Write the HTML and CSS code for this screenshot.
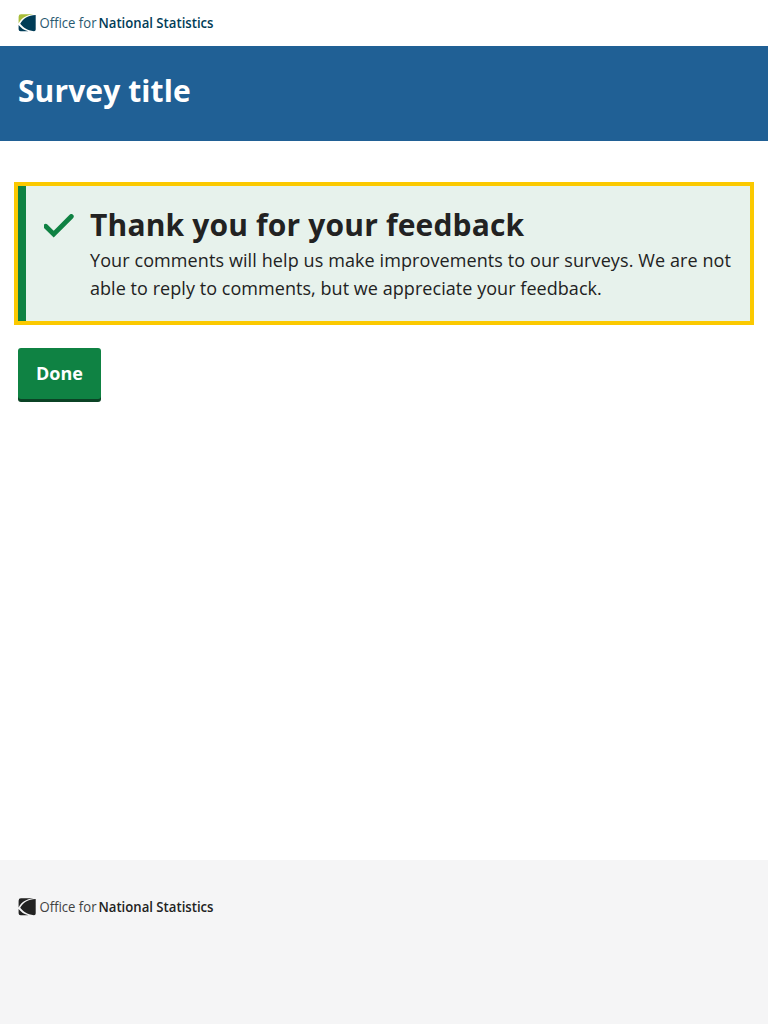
FILE: index.html
```html
<!DOCTYPE html>
<html lang="en">
<head>
<meta charset="utf-8">
<title>Survey title</title>
<link rel="stylesheet" href="styles.css">
</head>
<body>
<header>
  <div class="brand-bar">
    <svg class="logo" viewBox="0 0 196 18" role="img" aria-label="Office for National Statistics">
      <path class="logo-accent" d="M3 0.300H15.500C8 1 3 4.500 0.600 9.500V2.700Q0.600 0.300 3 0.300Z"/>
      <path class="logo-mark" d="M17.700 1V15.500Q17.700 17.300 16 17.300C9 16.300 5 13.500 2.200 9.800C5 4.500 10 1.500 17.700 1ZM0.600 11C3 14 6 16.300 10.500 17.300H2.600Q0.600 17.300 0.600 15.300Z"/>
      <text class="logo-light" x="21.500" y="14.200" textLength="57" lengthAdjust="spacingAndGlyphs">Office for</text>
      <text class="logo-bold" x="80.500" y="14.200" textLength="115" lengthAdjust="spacingAndGlyphs">National Statistics</text>
    </svg>
  </div>
  <div class="title-bar"><div class="survey-title">Survey title</div></div>
</header>
<main class="content">
  <section class="panel">
    <svg class="tick" viewBox="0 0 30 24" aria-hidden="true"><path d="M1.700 12.200L9.700 20.200L27.300 2.500"/></svg>
    <div>
      <h1 class="panel-title">Thank you for your feedback</h1>
      <p class="panel-text"><span class="panel-lead">Your comments will help us make improvements to our surveys. We are not</span> able to reply to comments, but we appreciate your feedback.</p>
    </div>
  </section>
  <button class="button" type="button">Done</button>
</main>
<footer class="footer">
  <svg class="logo logo-mono" viewBox="0 0 196 18" role="img" aria-label="Office for National Statistics">
    <path class="logo-accent" d="M3 0.300H15.500C8 1 3 4.500 0.600 9.500V2.700Q0.600 0.300 3 0.300Z"/>
    <path class="logo-mark" d="M17.700 1V15.500Q17.700 17.300 16 17.300C9 16.300 5 13.500 2.200 9.800C5 4.500 10 1.500 17.700 1ZM0.600 11C3 14 6 16.300 10.500 17.300H2.600Q0.600 17.300 0.600 15.300Z"/>
    <text class="logo-light" x="21.500" y="14.200" textLength="57" lengthAdjust="spacingAndGlyphs">Office for</text>
    <text class="logo-bold" x="80.500" y="14.200" textLength="115" lengthAdjust="spacingAndGlyphs">National Statistics</text>
  </svg>
</footer>
</body>
</html>
```
FILE: styles.css
```css
* { box-sizing: border-box; }
body {
  margin: 0;
  min-height: 100vh;
  display: flex;
  flex-direction: column;
  font-family: "Open Sans", sans-serif;
  font-size: 18px;
  line-height: 28px;
  color: #222;
  background: #fff;
}
.brand-bar { height: 46px; padding: 14px 18px; }
.logo { display: block; width: 196px; height: 18px; overflow: visible; color: #003c57; }
.logo-mono { color: #222; }
.logo-accent { fill: #a8bd3a; }
.logo-mono .logo-accent { fill: #222; }
.logo-mark { fill: currentColor; }
.logo-light, .logo-bold { fill: currentColor; font-family: "Open Sans", sans-serif; font-size: 15px; }
.logo-light { font-weight: 400; opacity: 0.85; }
.logo-bold { font-weight: 600; }
.title-bar { height: 95px; padding: 25px 18px; background: #206095; color: #fff; }
.survey-title { font-size: 30px; font-weight: 700; line-height: 40px; letter-spacing: 0.1px; }
.content { flex: 1; padding: 45px 18px 0; }
.panel {
  display: flex;
  gap: 16px;
  height: 135px;
  padding: 18px;
  border-left: 8px solid #0f8243;
  background: #e7f2ec;
  outline: 4px solid #fbc900;
}
.tick { flex: none; width: 30px; height: 24px; margin-top: 10px; }
.tick path { fill: none; stroke: #0f8243; stroke-width: 4.8; stroke-linecap: round; }
.panel-title { margin: 0; font-size: 30px; font-weight: 700; line-height: 42px; letter-spacing: 0.16px; }
.panel-text { margin: 0; letter-spacing: 0.05px; }
.panel-lead { letter-spacing: 0.098px; }
.button {
  display: block;
  height: 51px;
  margin: 27px 0 0;
  padding: 0 18px;
  border: 0;
  border-radius: 3px;
  background: #0f8243;
  box-shadow: 0 3px 0 #0b4325;
  color: #fff;
  font: 700 18px/51px "Open Sans", sans-serif;
}
.footer { height: 164px; padding: 38px 18px 0; background: #f5f5f6; }
```
